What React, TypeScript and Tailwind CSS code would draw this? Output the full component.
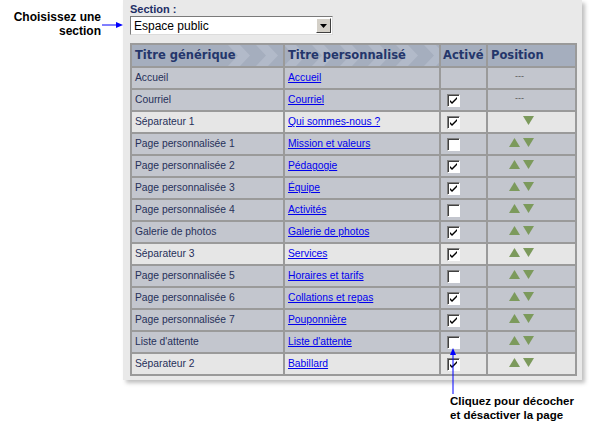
import React from 'react'

type Row = {
  generic: string
  custom: string
  active: boolean | null
  pos: 'none' | 'down' | 'both'
  light?: boolean
}

const ROWS: Row[] = [
  { generic: 'Accueil', custom: 'Accueil', active: null, pos: 'none' },
  { generic: 'Courriel', custom: 'Courriel', active: true, pos: 'none' },
  { generic: 'Séparateur 1', custom: 'Qui sommes-nous ?', active: true, pos: 'down', light: true },
  { generic: 'Page personnalisée 1', custom: 'Mission et valeurs', active: false, pos: 'both' },
  { generic: 'Page personnalisée 2', custom: 'Pédagogie', active: true, pos: 'both' },
  { generic: 'Page personnalisée 3', custom: 'Équipe', active: true, pos: 'both' },
  { generic: 'Page personnalisée 4', custom: 'Activités', active: false, pos: 'both' },
  { generic: 'Galerie de photos', custom: 'Galerie de photos', active: true, pos: 'both' },
  { generic: 'Séparateur 3', custom: 'Services', active: true, pos: 'both', light: true },
  { generic: 'Page personnalisée 5', custom: 'Horaires et tarifs', active: false, pos: 'both' },
  { generic: 'Page personnalisée 6', custom: 'Collations et repas', active: true, pos: 'both' },
  { generic: 'Page personnalisée 7', custom: 'Pouponnière', active: true, pos: 'both' },
  { generic: "Liste d'attente", custom: "Liste d'attente", active: false, pos: 'both' },
  { generic: 'Séparateur 2', custom: 'Babillard', active: true, pos: 'both', light: true },
]

function Checkbox({ checked }: { checked: boolean }) {
  return (
    <div className="w-[13px] h-[13px] bg-white border-t border-l border-t-[#808080] border-l-[#808080] border-b border-r border-b-white border-r-white shadow-[inset_1px_1px_0_#404040] flex items-center justify-center">
      {checked && (
        <svg width="9" height="9" viewBox="0 0 9 9">
          <path d="M1 4 L3 6 L8 1 L8 3 L3 8 L1 6 Z" fill="#000" />
        </svg>
      )}
    </div>
  )
}

function Up({ hidden }: { hidden?: boolean }) {
  return (
    <svg width="11" height="9" viewBox="0 0 11 9" className={hidden ? 'invisible' : ''}>
      <polygon points="5.5,0 11,9 0,9" fill="#7c9a5c" />
    </svg>
  )
}

function Down() {
  return (
    <svg width="11" height="9" viewBox="0 0 11 9">
      <polygon points="0,0 11,0 5.5,9" fill="#7c9a5c" />
    </svg>
  )
}

const HEAD = 'text-[11.5px] font-bold text-[#24366b]'

export default function App() {
  const font = { fontFamily: '"Liberation Sans", Arial, sans-serif' }
  const headFont = { fontFamily: '"DejaVu Sans", Verdana, sans-serif' }
  return (
    <div className="relative w-[589px] h-[423px] bg-white overflow-hidden" style={font}>
      {/* left annotation */}
      <div className="absolute left-0 top-[10px] w-[101px] text-right text-[12px] font-bold leading-[14px] text-black">
        Choisissez une
        <br />
        section
      </div>
      <svg className="absolute left-[102px] top-[21px]" width="22" height="8" viewBox="0 0 22 8">
        <line x1="0" y1="4" x2="16" y2="4" stroke="#0000ff" strokeWidth="1" />
        <polygon points="14,1 21,4 14,7" fill="#0000ff" />
      </svg>

      {/* panel */}
      <div className="absolute left-[123px] top-0 w-[459px] h-[380px] bg-[#e9e9e9] shadow-[3px_3px_4px_rgba(0,0,0,0.25)] px-[7px] pt-[3px]">
        <div className="text-[11px] font-bold text-[#1e2f66] leading-[12px]">Section :</div>
        <div className="mt-[1px] w-[203px] h-[19px] bg-white border border-t-[#7a7a7a] border-l-[#7a7a7a] border-b-[#dcdcdc] border-r-[#dcdcdc] flex items-center">
          <span className="flex-1 pl-[3px] text-[12px] text-black">Espace public</span>
          <div className="w-[15px] h-[15px] mr-[1px] bg-[#d4d0c8] border border-t-white border-l-white border-b-[#404040] border-r-[#404040] flex items-center justify-center">
            <svg width="7" height="4" viewBox="0 0 7 4">
              <polygon points="0,0 7,0 3.5,4" fill="#000" />
            </svg>
          </div>
        </div>

        <div className="mt-[8px] w-[447px] bg-[#9a9a9a] p-[2px] grid grid-cols-[151px_154px_45px_87px] gap-[2px] text-[10.3px]">
          {/* header */}
          <div className="relative col-span-2 h-[21px] grid grid-cols-[151px_154px] gap-[2px] bg-[#9a9a9a] overflow-hidden">
            <div className="bg-[#a5aebe]" />
            <div className="bg-[#a5aebe]" />
            <svg className="absolute left-0 top-0" width="307" height="21" viewBox="0 0 307 21">
              {[96, 124, 152, 180, 208, 236, 264, 292].map((x) => (
                <polygon
                  key={x}
                  points={`${x},0 ${x + 12},0 ${x + 22},10.5 ${x + 12},21 ${x},21 ${x + 10},10.5`}
                  fill="#b2bac9"
                />
              ))}
              <rect x="151" y="0" width="2" height="21" fill="#9a9a9a" />
            </svg>
            <div className={`absolute left-[3px] top-0 h-[21px] flex items-center ${HEAD}`} style={headFont}>
              Titre générique
            </div>
            <div className={`absolute left-[156px] top-0 h-[21px] flex items-center ${HEAD}`} style={headFont}>
              Titre personnalisé
            </div>
          </div>
          <div className={`h-[21px] bg-[#a5aebe] flex items-center pl-[2px] ${HEAD}`} style={headFont}>
            Activé
          </div>
          <div className={`h-[21px] bg-[#a5aebe] flex items-center pl-[3px] ${HEAD}`} style={headFont}>
            Position
          </div>

          {ROWS.map((r) => {
            const bg = r.light ? 'bg-[#e6e6e6]' : 'bg-[#c3c6ce]'
            return (
              <React.Fragment key={r.generic}>
                <div className={`${bg} h-[20px] flex items-center pl-[3px] text-[#26305a]`}>{r.generic}</div>
                <div className={`${bg} h-[20px] flex items-center pl-[3px]`}>
                  <a href="#" className="text-[#0000ee] underline">
                    {r.custom}
                  </a>
                </div>
                <div className={`${bg} h-[20px] flex items-center pl-[6px]`}>
                  {r.active !== null && <Checkbox checked={r.active} />}
                </div>
                <div className={`${bg} h-[20px] flex items-center`}>
                  {r.pos === 'none' && <span className="pl-[27px] text-[9px] text-[#555] -mt-[3px]">---</span>}
                  {r.pos !== 'none' && (
                    <div className="pl-[21px] -mt-[4px] flex gap-[3px]">
                      <Up hidden={r.pos === 'down'} />
                      <Down />
                    </div>
                  )}
                </div>
              </React.Fragment>
            )
          })}
        </div>
      </div>

      {/* bottom annotation */}
      <svg className="absolute left-[449px] top-[348px]" width="8" height="46" viewBox="0 0 8 46">
        <polygon points="4,0 7,7 1,7" fill="#0000ff" />
        <line x1="4" y1="5" x2="4" y2="46" stroke="#0000ff" strokeWidth="1" />
      </svg>
      <div className="absolute left-[450px] top-[394px] text-[11.5px] font-bold leading-[14px] text-black whitespace-nowrap">
        Cliquez pour décocher
        <br />
        et désactiver la page
      </div>
    </div>
  )
}
